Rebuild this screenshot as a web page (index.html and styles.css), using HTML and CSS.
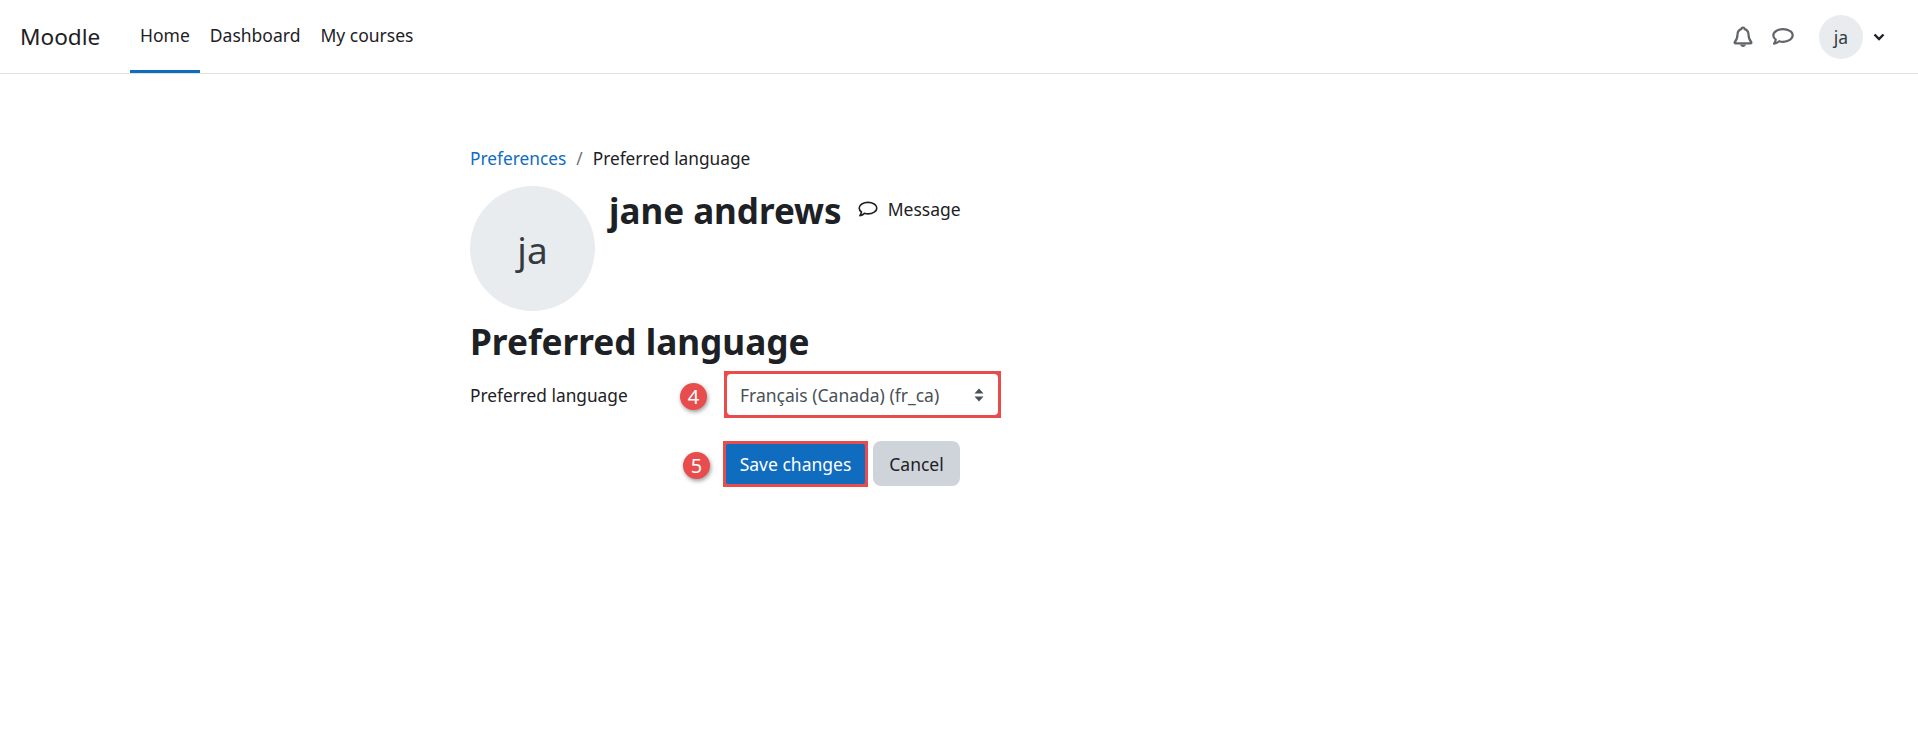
FILE: index.html
```html
<!DOCTYPE html>
<html lang="en">
<head>
<meta charset="utf-8">
<title>Preferred language</title>
<link rel="stylesheet" href="styles.css">
</head>
<body>
<header class="navbar">
  <a class="brand">Moodle</a>
  <nav class="nav">
    <a class="nav-item active">Home</a>
    <a class="nav-item">Dashboard</a>
    <a class="nav-item">My courses</a>
  </nav>
  <div class="nav-right">
    <svg class="icon-bell" viewBox="0 0 20 22" width="20" height="22"><path d="M10 1.500c-1 0-1.600.7-1.600 1.600C5.900 3.800 4.600 5.900 4.500 8.500c-.1 3.300-.7 5.500-2.800 7.600-.4.500-.1 1.200.5 1.200h15.600c.6 0 .9-.7.5-1.200-2.100-2.100-2.700-4.300-2.800-7.600-.1-2.600-1.400-4.700-3.900-5.400 0-.9-.6-1.600-1.600-1.600z" fill="none" stroke="#616569" stroke-width="2.200" stroke-linejoin="round"/><path d="M7.200 18.500h5.600c0 1.400-1.300 2.400-2.800 2.400s-2.800-1-2.800-2.400z" fill="#616569"/></svg>
    <svg class="icon-chat" viewBox="0 0 22 18" width="22" height="18"><path d="M11 1.200C5.800 1.200 1.300 3.800 1.300 7.300c0 1.800.9 3.300 2.500 4.400-.2 1.400-.9 2.700-1.700 4 2-.3 3.800-1.300 5.100-2.500 1.200.4 2.500.6 3.800.6 5.200 0 9.700-2.900 9.700-6.500S16.200 1.200 11 1.200z" fill="none" stroke="#616569" stroke-width="2.200" stroke-linejoin="round"/></svg>
    <span class="avatar-small">ja</span>
    <svg class="icon-caret" viewBox="0 0 12 8" width="12" height="8"><path d="M1.500 1.500 6 6l4.500-4.500" fill="none" stroke="#1d2125" stroke-width="2.400"/></svg>
  </div>
</header>
<main class="page">
  <div class="breadcrumb">
    <a class="crumb-link">Preferences</a>
    <span class="crumb-sep">/</span>
    <span>Preferred language</span>
  </div>
  <section class="profile">
    <div class="avatar-large">ja</div>
    <h2 class="user-name">jane andrews</h2>
    <a class="message">
      <svg class="icon-message" viewBox="0 0 22 18" width="20" height="17"><path d="M11 1.200C5.800 1.200 1.300 3.800 1.300 7.300c0 1.800.9 3.300 2.500 4.400-.2 1.400-.9 2.700-1.700 4 2-.3 3.800-1.300 5.100-2.500 1.200.4 2.500.6 3.800.6 5.200 0 9.700-2.900 9.700-6.500S16.200 1.200 11 1.200z" fill="none" stroke="#1d2125" stroke-width="1.800" stroke-linejoin="round"/></svg>
      Message
    </a>
  </section>
  <h1 class="title">Preferred language</h1>
  <form class="form">
    <label class="label">Preferred language</label>
    <div class="field">
      <span class="badge badge-four">4</span>
      <div class="highlight highlight-select">
        <div class="select">
          <span>Français (Canada) (fr_ca)</span>
          <svg viewBox="0 0 10 16" width="10" height="16"><path d="M5 1.500 9.500 6.500H.5zM5 14.500.5 9.500h9z" fill="#495057"/></svg>
        </div>
      </div>
    </div>
    <div class="field actions">
      <span class="badge badge-five">5</span>
      <div class="highlight highlight-button">
        <button type="button" class="btn btn-primary">Save changes</button>
      </div>
      <button type="button" class="btn btn-secondary">Cancel</button>
    </div>
  </form>
</main>
</body>
</html>
```

FILE: styles.css
```css
* { box-sizing: border-box; }
html, body { margin: 0; padding: 0; }
body {
  height: 747px;
  overflow: hidden;
  background: #fff;
  color: #1d2125;
  font-family: "Noto Sans", "Open Sans", sans-serif;
  font-size: 17.5px;
}
.navbar {
  display: flex;
  align-items: center;
  height: 74px;
  padding: 0 33px 0 20px;
  border-bottom: 1px solid #dee2e6;
}
.brand { font-size: 22.6px; width: 110px; margin-top: -1px; }
.nav { display: flex; align-self: stretch; }
.nav-item {
  display: flex;
  align-items: center;
  height: 73px;
  padding: 0 10px;
  border-bottom: 3px solid transparent;
}
.nav-item.active { border-bottom-color: #0f6cbf; }
.nav-right { display: flex; align-items: center; margin-left: auto; }
.icon-bell { margin-right: 19px; }
.icon-chat { margin-right: 25px; }
.avatar-small {
  display: flex;
  align-items: center;
  justify-content: center;
  width: 44px;
  height: 44px;
  border-radius: 50%;
  background: #e9ecef;
  color: #343a40;
}
.icon-caret { margin-left: 10px; }
.page { padding: 72px 0 0 470px; }
.breadcrumb { display: flex; align-items: center; height: 24px; font-size: 17.3px; }
.crumb-link { color: #0f6cbf; }
.crumb-sep { color: #6a737b; margin: 0 10px; }
.profile { display: flex; align-items: flex-start; margin-top: 16px; }
.avatar-large {
  display: flex;
  align-items: center;
  justify-content: center;
  width: 125px;
  height: 125px;
  padding-top: 2px;
  border-radius: 50%;
  background: #e9ecef;
  color: #343a40;
  font-size: 37px;
}
.user-name {
  margin: 3px 0 0 14px;
  font-size: 35px;
  line-height: 44px;
  font-weight: 700;
}
.message {
  display: flex;
  align-items: center;
  gap: 10px;
  margin: 11px 0 0 16px;
  line-height: 24px;
}
.title {
  margin: 7px 0 0;
  font-size: 35.2px;
  line-height: 46px;
  font-weight: 700;
}
.form {
  display: grid;
  grid-template-columns: 254px auto;
  justify-content: start;
  margin-top: 7px;
}
.label { align-self: center; font-size: 17.3px; padding-top: 1px; }
.field { display: flex; position: relative; }
.actions { grid-column: 2; align-items: flex-start; margin-top: 23px; margin-left: -1px; gap: 5px; }
.highlight { padding: 3px; background: #e84c4c; }
.select {
  display: flex;
  align-items: center;
  justify-content: space-between;
  width: 271px;
  height: 41px;
  padding: 0 14px 0 13px;
  border-radius: 4px;
  background: #fff;
  color: #495057;
}
.btn { display: block; font-family: inherit; font-size: 17.5px; padding: 0; border: 0; }
.btn-primary {
  width: 139px;
  height: 40px;
  border-radius: 2px;
  background: #0f6cbf;
  color: #fff;
}
.btn-secondary {
  width: 87px;
  height: 45px;
  border-radius: 8px;
  background: #ced4da;
  color: #1d2125;
}
.badge {
  position: absolute;
  display: flex;
  align-items: center;
  justify-content: center;
  width: 27px;
  height: 27px;
  border-radius: 50%;
  background: #e84c4c;
  color: #fff;
  font-size: 20px;
  box-shadow: 1px 2px 4px rgba(0, 0, 0, .4);
}
.badge-four { left: -44px; top: 12px; }
.badge-five { left: -40px; top: 11px; }
```
